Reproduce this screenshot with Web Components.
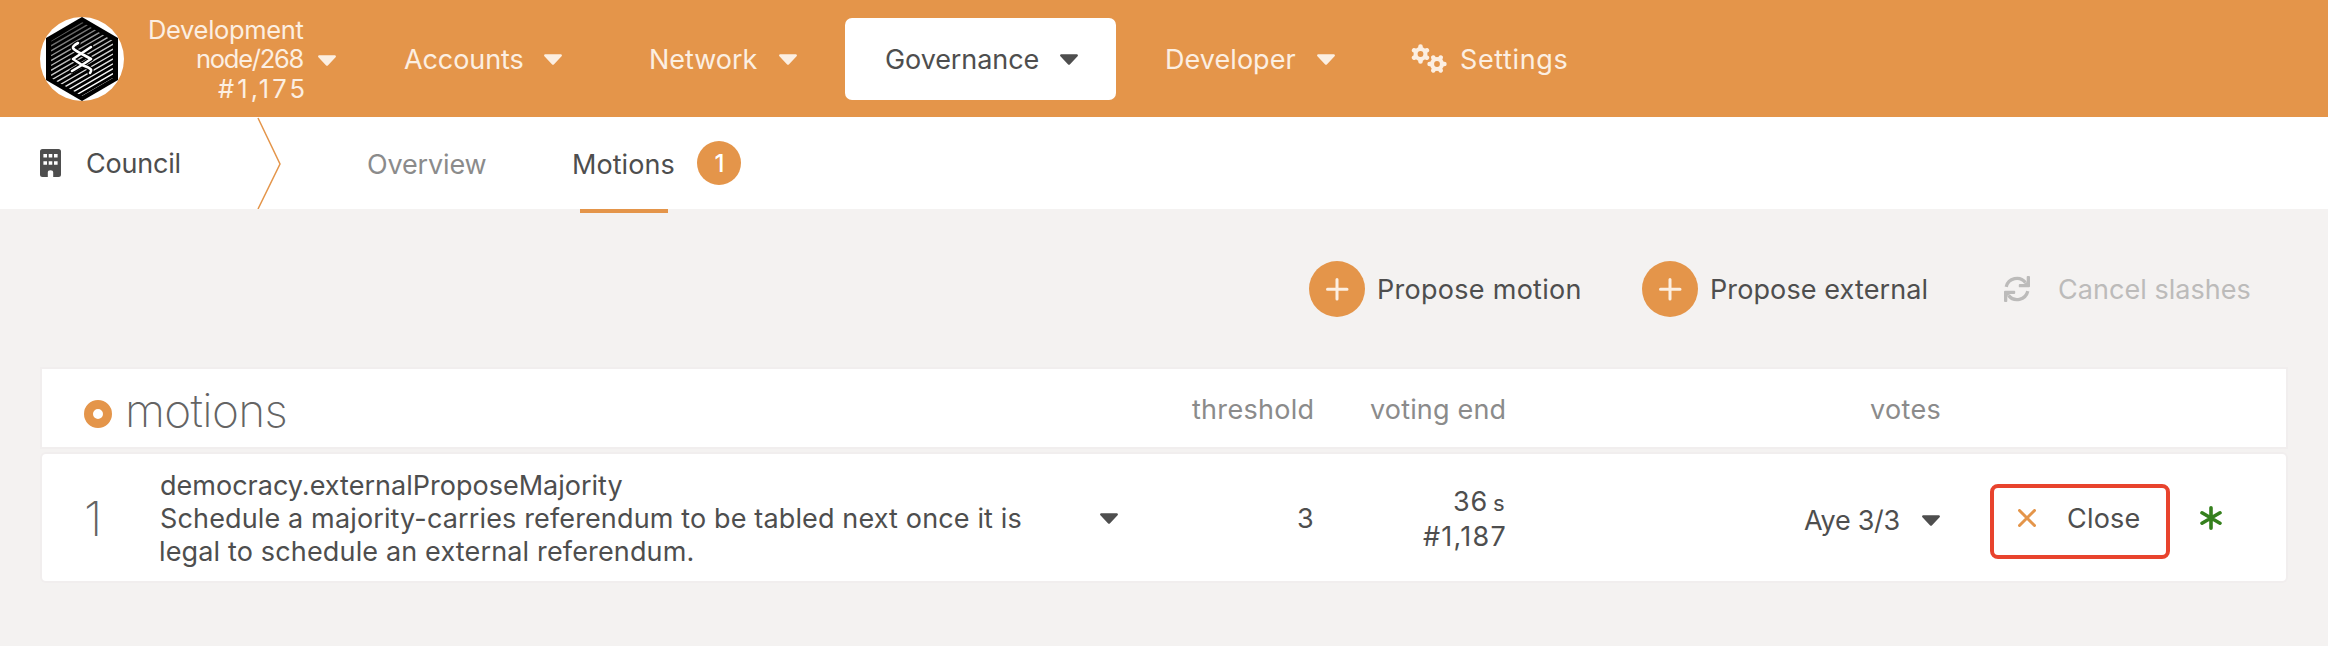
<!DOCTYPE html>
<html lang="en">
<head>
<meta charset="utf-8">
<title>Council motions</title>
<style>
  html, body { margin: 0; padding: 0; background: #f4f2f1; }
  body { font-family: Inter, "Open Sans", sans-serif; color: #4e4e4e; }
</style>
</head>
<body>
<council-app></council-app>
<script>
const define = (name, html, setup) => {
  const template = document.createElement('template');
  template.innerHTML = html.trim();
  customElements.define(name, class extends HTMLElement {
    constructor() {
      super();
      this.attachShadow({ mode: 'open' }).append(template.content.cloneNode(true));
    }
    connectedCallback() { if (setup) setup(this); }
  });
};

/* A single line of text, tracked so that its ink fills the width `w`. */
const pen = document.createElement('canvas').getContext('2d');
define('ui-text', `
  <style>:host { display: block; flex: none; white-space: pre; font-kerning: normal; }</style><slot></slot>`,
  el => {
    const size = el.getAttribute('size') || 27;
    const weight = el.getAttribute('weight') || 400;
    const width = +el.getAttribute('w');
    const text = el.textContent;
    pen.font = weight + ' ' + size + 'px Inter, "Open Sans", sans-serif';
    const m = pen.measureText(text);
    const ink = m.actualBoundingBoxLeft + m.actualBoundingBoxRight;
    el.style.fontSize = size + 'px';
    el.style.fontWeight = weight;
    el.style.width = width + 'px';
    el.style.textIndent = (m.actualBoundingBoxLeft + 1) + 'px';
    if (text.length > 1) el.style.letterSpacing = ((width - 1.5 - ink) / (text.length - 1)).toFixed(3) + 'px';
  });

define('ui-caret', `
  <style>:host { display: block; flex: none; width: 18px; height: 11px; } svg { display: block; }</style>
  <svg width="18" height="11" viewBox="10 190 300 173" preserveAspectRatio="none"><path fill="currentColor" d="M31.300 192h257.300c17.800 0 26.700 21.500 14.100 34.100L174.100 354.800c-7.800 7.800-20.500 7.800-28.300 0L17.200 226.100C4.600 213.500 13.500 192 31.300 192z"/></svg>`);

define('chain-logo', `
  <style>:host { display: block; flex: none; width: 84px; height: 84px; } svg { display: block; }</style>
  <svg width="84" height="84" viewBox="0 0 84 84">
    <defs>
      <clipPath id="inner"><path d="M42 5 73 24V61L42 79 11 61V24z"/></clipPath>
      <linearGradient id="fade" x1="20" y1="8" x2="50" y2="70" gradientUnits="userSpaceOnUse">
        <stop offset="0" stop-color="#fff" stop-opacity=".2"/><stop offset=".45" stop-color="#fff" stop-opacity=".7"/><stop offset="1" stop-color="#fff"/>
      </linearGradient>
    </defs>
    <circle cx="42" cy="42" r="42" fill="#fff"/>
    <path d="M42 0 78 21V63L42 84 6 63V21z" fill="#000"/>
    <g clip-path="url(#inner)" stroke="url(#fade)" stroke-width="1.400" fill="none">
      <path id="hatch"/>
    </g>
    <g fill="none" stroke-linecap="round" stroke-linejoin="round">
      <path stroke="#000" stroke-width="5" d="M38 26C29 31 33 32 42 37L51 42 42 48 32 54M51 30 42 36 33 42 42 48C53 52 52 53 50 56"/>
      <path stroke="#fff" stroke-width="2.600" d="M38 26C29 31 33 32 42 37L51 42 42 48 32 54M51 30 42 36 33 42 42 48C53 52 52 53 50 56"/>
    </g>
  </svg>`,
  el => {
    let d = '';
    for (let y = 24; y < 120; y += 4.9) d += 'M11 ' + y.toFixed(1) + 'L73 ' + (y - 36).toFixed(1);
    el.shadowRoot.getElementById('hatch').setAttribute('d', d);
  });

define('cogs-icon', `
  <style>:host { display: block; flex: none; width: 36px; height: 30px; } svg { display: block; }</style>
  <svg width="36" height="30" viewBox="0 0 36 30">
    <defs><mask id="holes"><rect width="36" height="30" fill="#fff"/><circle cx="9.500" cy="10" r="2.900"/><circle cx="26" cy="20" r="2.900"/></mask></defs>
    <g mask="url(#holes)" fill="currentColor" stroke="currentColor" stroke-width="4.600" stroke-linecap="round">
      <circle cx="9.500" cy="10" r="7" stroke="none"/>
      <path d="M9.500 2.600v14.800M3.100 6.300l12.800 7.400M3.100 13.700l12.800-7.400"/>
      <circle cx="26" cy="20" r="7" stroke="none"/>
      <path d="M18.600 20h14.800M22.300 13.600l7.400 12.800M22.300 26.400l7.400-12.800"/>
    </g>
  </svg>`);

define('building-icon', `
  <style>:host { display: block; flex: none; width: 21px; height: 28px; } svg { display: block; }</style>
  <svg width="21" height="28" viewBox="0 0 21 28"><path fill="currentColor" fill-rule="evenodd" d="M2.500 0h16Q21 0 21 2.500v23Q21 28 18.500 28H13.200V23.500Q13.200 21.200 10.500 21.200T7.800 23.500V28H2.500Q0 28 0 25.500v-23Q0 0 2.500 0zM3.400 5v3.600h3.600V5zM8.700 5v3.600h3.600V5zM14 5v3.600h3.600V5zM3.400 12.200v3.600h3.600v-3.600zM8.700 12.200v3.600h3.600v-3.600zM14 12.200v3.600h3.600v-3.600z"/></svg>`);

define('sync-icon', `
  <style>:host { display: block; flex: none; width: 26px; height: 26px; } svg { display: block; }</style>
  <svg width="26" height="26" viewBox="0 0 26 26">
    <g id="half"><path d="M2.200 10.900A11 11 0 0 1 21.500 6.600" fill="none" stroke="currentColor" stroke-width="3.300"/>
    <path fill="currentColor" d="M23.600 0h1.400Q26 0 26 1v9.300Q26 11.300 25 11.300H15.600Q14.800 11.300 14.800 10.400V9Q14.800 8.100 15.800 8.100L20 7.900 22.700 6V1Q22.700 0 23.600 0z"/></g>
    <use href="#half" transform="rotate(180 13 13)"/>
  </svg>`);

define('nav-item', `
  <style>
    :host { display: flex; flex: none; align-items: center; color: #fcefe2; height: 82px; }
    :host([active]) { background: #fff; color: #4e4e4e; border-radius: 7px; width: 231px; padding-left: 40px; }
  </style><slot></slot>`);

define('top-bar', `
  <style>
    :host { display: flex; align-items: center; height: 117px; padding: 1px 0 0 40px; background: #e4954a; color: #fcefe2; box-sizing: border-box; }
    .chain { display: flex; flex-direction: column; align-items: flex-end; width: 155px; margin: 0 14px 0 25px; line-height: 29.500px; }
  </style>
  <chain-logo></chain-logo>
  <div class="chain">
    <ui-text size="25.500" w="155">Development</ui-text>
    <ui-text size="25.500" w="108">node/268</ui-text>
    <ui-text size="25.500" w="87">#1,175</ui-text>
  </div>
  <ui-caret style="margin-top:3px"></ui-caret>
  <nav-item style="margin-left:67px"><ui-text w="120">Accounts</ui-text><ui-caret style="margin-left:21px"></ui-caret></nav-item>
  <nav-item style="margin-left:88px"><ui-text w="108">Network</ui-text><ui-caret style="margin-left:21px"></ui-caret></nav-item>
  <nav-item active style="margin-left:48px"><ui-text w="154">Governance</ui-text><ui-caret style="margin-left:21px"></ui-caret></nav-item>
  <nav-item style="margin-left:50px"><ui-text w="130">Developer</ui-text><ui-caret style="margin-left:21px"></ui-caret></nav-item>
  <nav-item style="margin-left:76px"><cogs-icon></cogs-icon><ui-text w="107" style="margin-left:13px">Settings</ui-text></nav-item>`);

define('tab-bar', `
  <style>
    :host { display: flex; align-items: center; height: 92px; padding-left: 40px; background: #fff; box-sizing: border-box; }
    svg { flex: none; margin-left: 77px; }
    .muted { color: #8b8b8b; }
    .tab { position: relative; height: 92px; display: flex; align-items: center; margin-left: 86px; }
    .line { position: absolute; left: 7px; top: 92px; width: 88px; height: 4px; background: #e4954a; }
    .badge { width: 44px; height: 44px; border-radius: 50%; background: #e4954a; color: #fff; margin-left: 23px; display: flex; align-items: center; justify-content: center; }
  </style>
  <building-icon></building-icon>
  <ui-text w="94" style="margin-left:25px">Council</ui-text>
  <svg width="24" height="92" viewBox="0 0 24 92"><path d="M1 1 23 47 1 92" fill="none" stroke="#e4954a" stroke-width="1.500"/></svg>
  <ui-text class="muted" w="120" style="margin-left:86px;padding-top:2px">Overview</ui-text>
  <div class="tab"><ui-text w="101" style="padding-top:2px">Motions</ui-text><span class="line"></span></div>
  <div class="badge"><ui-text size="24" weight="500" w="9">1</ui-text></div>`);

define('action-button', `
  <style>
    :host { display: flex; flex: none; align-items: center; }
    .disc { width: 56px; height: 56px; border-radius: 50%; background: #e4954a; margin-right: 13px; }
    svg { display: block; }
  </style>
  <div class="disc"><svg width="56" height="56" viewBox="0 0 56 56"><path d="M28 18.500v19.500M18.500 28.200h19.500" stroke="#fcefe2" stroke-width="3" stroke-linecap="round"/></svg></div>
  <slot></slot>`);

define('action-bar', `
  <style>
    :host { display: flex; align-items: center; justify-content: flex-end; height: 160px; padding-right: 78px; box-sizing: border-box; }
    .off { display: flex; align-items: center; color: #bcbbba; margin-left: 77px; }
    ui-text { padding-top: 1px; }
  </style>
  <action-button><ui-text w="202">Propose motion</ui-text></action-button>
  <action-button style="margin-left:62px"><ui-text w="216">Propose external</ui-text></action-button>
  <div class="off"><sync-icon></sync-icon><ui-text w="192" style="margin-left:28px">Cancel slashes</ui-text></div>`);

define('motion-table', `
  <style>
    :host { display: block; padding: 0 42px; }
    .row { display: grid; grid-template-columns: 118px 958px 195px 192px 435px 1fr; align-items: center; background: #fff; box-shadow: 0 0 0 2px #f1eeee; }
    .head { height: 78px; color: #8b8b8b; }
    .body { height: 127px; margin-top: 7px; border-radius: 4px; }
    .title { grid-column: 1 / 3; display: flex; align-items: center; padding-left: 42px; color: #646464; }
    .ring { width: 28px; height: 28px; box-sizing: border-box; border: 9px solid #e4954a; border-radius: 50%; margin: 11px 16px 0 0; }
    .right { justify-self: end; padding-top: 2px; }
    .desc { display: flex; align-items: center; justify-content: space-between; line-height: 33px; padding-top: 1px; }
    .end { display: flex; flex-direction: column; align-items: flex-end; line-height: 33px; padding-top: 2px; }
    .when { display: flex; align-items: baseline; gap: 6px; }
    .votes { display: flex; align-items: center; justify-content: flex-end; gap: 22px; padding-top: 5px; }
    .tools { display: flex; align-items: center; padding-top: 1px; }
    .close { width: 180px; height: 75px; box-sizing: border-box; border: 4px solid #e8432d; border-radius: 8px; margin: 6px 30px 0 50px; display: flex; align-items: center; padding: 0 0 6px 24px; }
    svg { display: block; flex: none; }
  </style>
  <div class="row head">
    <div class="title"><span class="ring"></span><ui-text size="46" weight="200" w="158" style="padding-top:4px">motions</ui-text></div>
    <ui-text class="right" w="122">threshold</ui-text>
    <ui-text class="right" w="136">voting end</ui-text>
    <ui-text class="right" w="71">votes</ui-text>
  </div>
  <div class="row body">
    <ui-text size="48" weight="200" w="14" style="margin-left:44px;padding-top:1px;color:#646464">1</ui-text>
    <div class="desc">
      <div>
        <ui-text w="463">democracy.externalProposeMajority</ui-text>
        <ui-text w="861">Schedule a majority-carries referendum to be tabled next once it is</ui-text>
        <ui-text w="533">legal to schedule an external referendum.</ui-text>
      </div>
      <ui-caret></ui-caret>
    </div>
    <ui-text class="right" w="16">3</ui-text>
    <div class="end">
      <div class="when"><ui-text w="34">36</ui-text><ui-text size="22" w="12">s</ui-text></div>
      <ui-text w="83">#1,187</ui-text>
    </div>
    <div class="votes"><ui-text w="97">Aye 3/3</ui-text><ui-caret></ui-caret></div>
    <div class="tools">
      <div class="close">
        <svg width="18" height="18" viewBox="0 0 18 18"><path d="M1.500 1.500l15 15M16.500 1.500l-15 15" stroke="#e4954a" stroke-width="3" stroke-linecap="round"/></svg>
        <ui-text w="73" style="margin-left:31px">Close</ui-text>
      </div>
      <svg width="22" height="24" viewBox="0 0 22 24"><path d="M11 1.800v20.400M2 6.800l18 10.400M2 17.200l18-10.400" stroke="#35801d" stroke-width="3.600" stroke-linecap="round"/></svg>
    </div>
  </div>`);

define('council-app', `
  <style>:host { display: block; height: 646px; background: #f4f2f1; overflow: hidden; }</style>
  <top-bar></top-bar>
  <tab-bar></tab-bar>
  <action-bar></action-bar>
  <motion-table></motion-table>`);
</script>
</body>
</html>
